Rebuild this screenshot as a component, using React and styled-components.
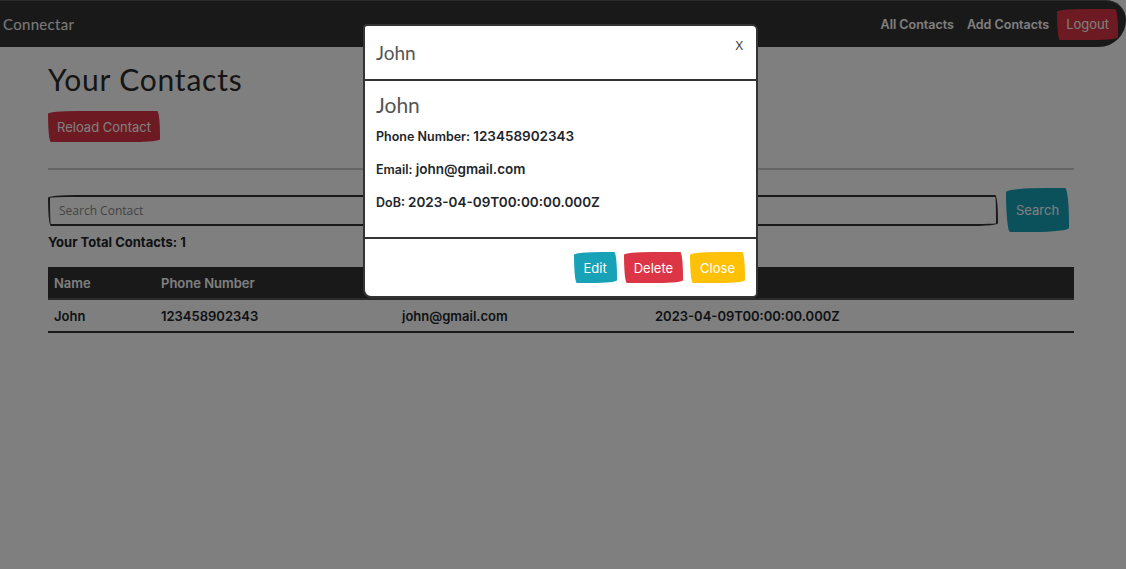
import React from 'react';
import styled, { createGlobalStyle } from 'styled-components';

const GlobalStyle = createGlobalStyle`
  body {
    margin: 0;
    background: #fff;
    font-family: Inter, "Liberation Sans", sans-serif;
    color: #212529;
  }
`;

const sketch = `
  border-radius: 255px 25px 225px 25px / 25px 225px 25px 255px;
`;

const Navbar = styled.nav`
  display: flex;
  align-items: center;
  height: 46px;
  background: #333;
  border-top: 1px solid #555;
  border-radius: 0 22px 30px 0;
  padding: 0 8px 0 3px;
`;

const Brand = styled.div`
  font-family: Lato, "Open Sans", sans-serif;
  font-size: 15px;
  color: #f5f5f5;
  letter-spacing: 0.3px;
`;

const NavLinks = styled.div`
  display: flex;
  align-items: center;
  gap: 13px;
  margin-left: auto;
`;

const NavLink = styled.a`
  font-size: 12.5px;
  font-weight: 600;
  color: #fff;
  text-decoration: none;
`;

const Button = styled.button`
  ${sketch}
  border: 2px solid ${p => p.$bg};
  background: ${p => p.$bg};
  color: #fff;
  font-family: Inter, "Liberation Sans", sans-serif;
  font-size: 13px;
  padding: 0 ${p => p.$px || 8}px;
  height: ${p => p.$h || 31}px;
  margin-left: ${p => p.$ml || 0}px;
  cursor: pointer;
`;

const Main = styled.main`
  width: 1026px;
  margin-left: 48px;
`;

const Heading = styled.h1`
  font-family: Lato, "Open Sans", sans-serif;
  font-weight: 400;
  font-size: 30px;
  color: #2b2b2b;
  letter-spacing: 0.8px;
  margin: 14px 0 14px;
`;

const Rule = styled.hr`
  border: none;
  border-top: 2px solid #ccc;
  margin: 26px 0 18px;
`;

const SearchRow = styled.div`
  display: flex;
  align-items: center;
  gap: 8px;
`;

const SearchInput = styled.input`
  ${sketch}
  flex: 0 0 950px;
  box-sizing: border-box;
  height: 31px;
  border: 2px solid #333;
  padding: 0 9px;
  font-family: "Open Sans", sans-serif;
  font-size: 12px;
  &::placeholder { color: #888; }
`;

const Total = styled.p`
  font-size: 13px;
  font-weight: 700;
  line-height: 16px;
  margin: 2px 0 17px;
`;

const Table = styled.table`
  width: 100%;
  border-collapse: collapse;
  table-layout: fixed;
  font-size: 13px;
`;

const Th = styled.th`
  background: #333;
  color: #fff;
  text-align: left;
  font-weight: 600;
  height: 31px;
  padding: 0 6px;
  border-bottom: 2px solid #555;
  width: ${p => (p.$w ? `${p.$w}px` : 'auto')};
`;

const Td = styled.td`
  font-weight: 600;
  height: 31px;
  padding: 0 6px;
  border-bottom: 2px solid #333;
`;

const Backdrop = styled.div`
  position: fixed;
  inset: 0;
  background: rgba(0, 0, 0, 0.5);
  display: flex;
  justify-content: center;
  align-items: flex-start;
  padding: 24px 5px 0 0;
`;

const Modal = styled.div`
  width: 395px;
  background: #fff;
  border: 2px solid #333;
  border-radius: 4px 6px 5px 8px;
  box-sizing: border-box;
`;

const ModalHeader = styled.div`
  display: flex;
  justify-content: space-between;
  align-items: flex-start;
  height: 53px;
  padding: 0 13px 0 11px;
  border-bottom: 2px solid #333;
`;

const ModalTitle = styled.h5`
  font-family: Lato, "Open Sans", sans-serif;
  font-weight: 400;
  font-size: 19px;
  color: #555;
  margin: 15px 0 0;
`;

const CloseX = styled.span`
  font-family: "Open Sans", sans-serif;
  font-size: 13px;
  color: #333;
  margin-top: 10px;
`;

const ModalBody = styled.div`
  padding: 11px 11px 27px;
  border-bottom: 2px solid #333;
`;

const BodyName = styled.h3`
  font-family: Lato, "Open Sans", sans-serif;
  font-weight: 400;
  font-size: 21px;
  color: #555;
  margin: 0 0 11px;
`;

const Field = styled.p`
  font-size: 12.5px;
  font-weight: 600;
  margin: 0 0 17px;
  &:last-child { margin-bottom: 0; }
`;

const Value = styled.span`
  font-size: 13.5px;
`;

const ModalFooter = styled.div`
  display: flex;
  justify-content: flex-end;
  gap: 7px;
  padding: 13px 11px 13px;
`;

const contacts = [
  { name: 'John', phone: '123458902343', email: 'john@gmail.com', dob: '2023-04-09T00:00:00.000Z' },
];

export default function App() {
  const c = contacts[0];
  return (
    <>
      <GlobalStyle />
      <Navbar>
        <Brand>Connectar</Brand>
        <NavLinks>
          <NavLink href="#">All Contacts</NavLink>
          <NavLink href="#">Add Contacts</NavLink>
          <Button $bg="#dc3545" $px={7} $ml={-5}>Logout</Button>
        </NavLinks>
      </Navbar>
      <Main>
        <Heading>Your Contacts</Heading>
        <Button $bg="#dc3545" $px={7}>Reload Contact</Button>
        <Rule />
        <SearchRow>
          <SearchInput placeholder="Search Contact" />
          <Button $bg="#17a2b8" $h={44} $px={8}>Search</Button>
        </SearchRow>
        <Total>Your Total Contacts: {contacts.length}</Total>
        <Table>
          <thead>
            <tr>
              <Th $w={95}>Name</Th>
              <Th $w={229}>Phone Number</Th>
              <Th $w={241}>Email</Th>
              <Th>DoB</Th>
            </tr>
          </thead>
          <tbody>
            {contacts.map(r => (
              <tr key={r.email}>
                <Td>{r.name}</Td>
                <Td>{r.phone}</Td>
                <Td>{r.email}</Td>
                <Td>{r.dob}</Td>
              </tr>
            ))}
          </tbody>
        </Table>
      </Main>
      <Backdrop>
        <Modal>
          <ModalHeader>
            <ModalTitle>John</ModalTitle>
            <CloseX>X</CloseX>
          </ModalHeader>
          <ModalBody>
            <BodyName>{c.name}</BodyName>
            <Field>Phone Number: <Value>{c.phone}</Value></Field>
            <Field>Email: <Value>{c.email}</Value></Field>
            <Field>DoB: <Value>{c.dob}</Value></Field>
          </ModalBody>
          <ModalFooter>
            <Button $bg="#17a2b8">Edit</Button>
            <Button $bg="#dc3545">Delete</Button>
            <Button $bg="#ffc107">Close</Button>
          </ModalFooter>
        </Modal>
      </Backdrop>
    </>
  );
}
